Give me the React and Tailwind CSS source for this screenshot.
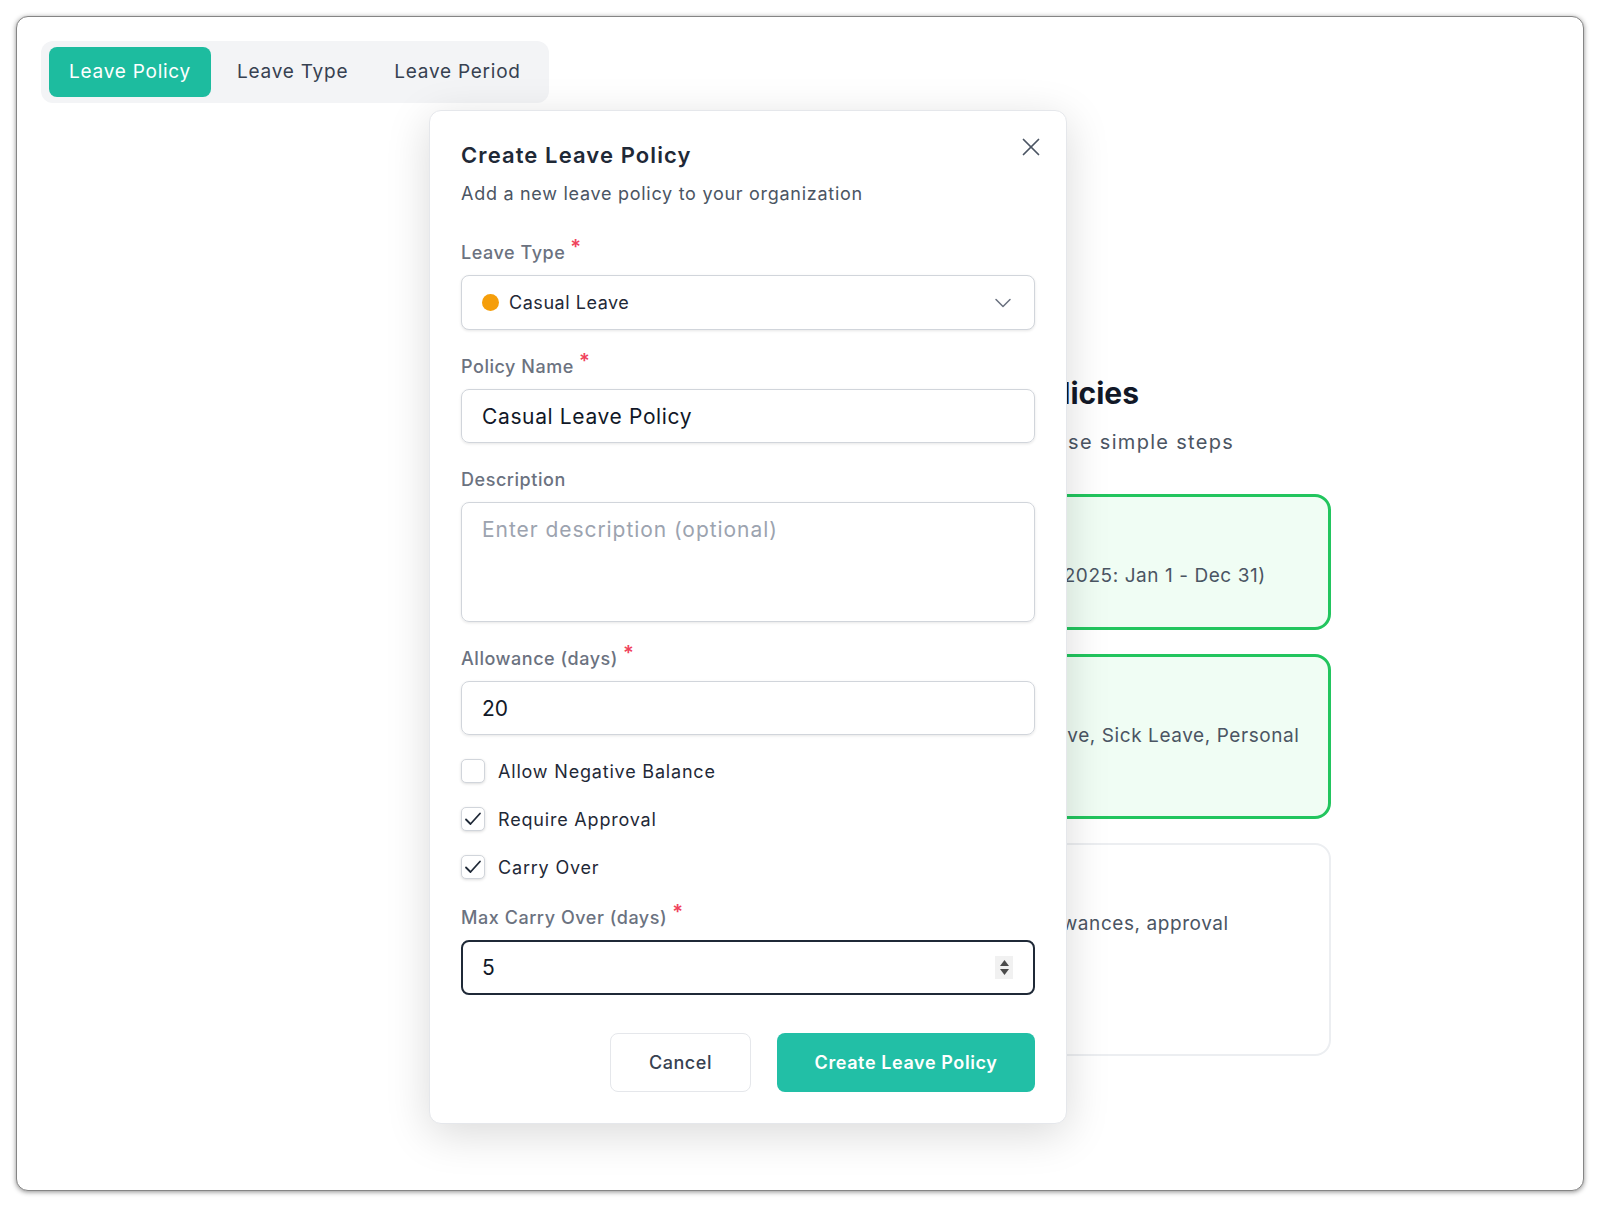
import { ChevronDown, X } from "lucide-react";

function Label({ children, required }) {
  return (
    <div className="mb-[11px] flex h-6 items-center text-[18px] font-medium tracking-[0.03em] text-[#6b7280]">
      {children}
      {required && (
        <span className="relative -top-[5px] ml-[5px] text-[20px] font-semibold text-[#f0435c]">*</span>
      )}
    </div>
  );
}

function CheckRow({ label, checked }) {
  return (
    <div className="flex h-6 items-center gap-[13px]">
      <div className="flex h-6 w-6 items-center justify-center rounded-[5px] border border-[#d1d5db] bg-white shadow-[0_1px_3px_rgba(0,0,0,0.14)]">
        {checked && (
          <svg width="20" height="20" viewBox="0 0 20 20" fill="none">
            <path d="M3 10.5l4.5 4.5L17 4.5" stroke="#1f2937" strokeWidth="1.8" strokeLinecap="round" strokeLinejoin="round" />
          </svg>
        )}
      </div>
      <span className="text-[18px] tracking-[0.045em] text-[#1f2937]">{label}</span>
    </div>
  );
}

function StepCard({ num, title, desc, active, height }) {
  return (
    <div
      className={`flex gap-4 rounded-2xl p-6 ${height} ${
        active ? "border-[3px] border-[#22c55e] bg-[#f0fdf4]" : "border-2 border-[#eceef1] bg-white"
      }`}
    >
      <div className="flex h-10 w-10 shrink-0 items-center justify-center rounded-full bg-[#22c55e] font-semibold text-white">
        {num}
      </div>
      <div>
        <div className="text-[20px] font-semibold text-[#111827]">{title}</div>
        <p className="mt-[11px] text-[19px] leading-7 tracking-[0.03em] text-[#4b5563]">{desc}</p>
      </div>
    </div>
  );
}

export default function App() {
  return (
    <div className="min-h-screen bg-white p-4 font-['Inter',sans-serif]">
      <div className="relative h-[1175px] overflow-hidden rounded-xl border border-[#858585] bg-white px-6 pt-6 shadow-[0_1px_5px_rgba(0,0,0,0.45)]">
        {/* tabs */}
        <div className="inline-flex gap-1.5 rounded-xl bg-[#f3f4f6] px-2 py-[6px]">
          <button className="h-[50px] rounded-lg bg-[#1dbc9f] px-5 text-[19px] tracking-[0.04em] text-white">Leave Policy</button>
          <button className="h-[50px] rounded-lg px-5 text-[19px] tracking-[0.04em] text-[#374151]">Leave Type</button>
          <button className="h-[50px] rounded-lg px-5 text-[19px] tracking-[0.04em] text-[#374151]">Leave Period</button>
        </div>

        {/* page content behind the dialog */}
        <div className="flex justify-end pr-[228px]">
          <div className="w-[560px] pt-[272px]">
            <h1 className="text-[30px] font-bold leading-9 text-[#111827]">Setting Up Leave Policies</h1>
            <p className="mt-[17px] text-[20px] leading-7 tracking-[0.065em] text-[#4b5563]">Get started by following these simple steps</p>
            <div className="mt-[38px] flex flex-col gap-6">
              <StepCard num="1" title="Leave Period" desc="Define leave periods (2025: Jan 1 - Dec 31)" active height="h-[136px]" />
              <StepCard num="2" title="Leave Types" desc="Add types: Casual Leave, Sick Leave, Personal Leave" active height="h-[165px]" />
              <StepCard num="3" title="Leave Policy" desc="Set up policy with allowances, approval workflows" height="h-[213px]" />
            </div>
          </div>
        </div>

        {/* dialog */}
        <div className="absolute left-[412px] top-[93px] w-[638px] rounded-xl border border-[#e5e7eb] bg-white px-[31px] pb-[31px] pt-[30px] shadow-[0_10px_44px_rgba(0,0,0,0.15)]">
          <button className="absolute right-[20px] top-[21px] text-[#4b5563]">
            <X size={30} strokeWidth={1.4} />
          </button>
          <h2 className="text-[22px] font-semibold leading-7 tracking-[0.05em] text-[#1f2937]">Create Leave Policy</h2>
          <p className="mt-[13px] text-[18px] leading-6 tracking-[0.04em] text-[#4b5563]">Add a new leave policy to your organization</p>

          <div className="mt-[34px] flex flex-col gap-6">
            <div>
              <Label required>Leave Type</Label>
              <div className="flex h-[55px] items-center rounded-lg border border-[#d1d5db] bg-white pl-5 pr-[17px] shadow-[0_1px_3px_rgba(0,0,0,0.1)]">
                <span className="h-[17px] w-[17px] rounded-full bg-[#f59e0b]" />
                <span className="ml-[10px] flex-1 text-[18px] tracking-[0.03em] text-[#1f2937]">Casual Leave</span>
                <ChevronDown size={28} strokeWidth={1.3} className="text-[#6b7280]" />
              </div>
            </div>

            <div>
              <Label required>Policy Name</Label>
              <input
                readOnly
                value="Casual Leave Policy"
                className="h-[54px] w-full rounded-lg border border-[#d1d5db] px-5 text-[21px] tracking-[0.03em] text-[#111827] shadow-[0_1px_3px_rgba(0,0,0,0.1)] outline-none"
              />
            </div>

            <div>
              <Label>Description</Label>
              <textarea
                readOnly
                placeholder="Enter description (optional)"
                className="block h-[120px] w-full resize-none rounded-lg border border-[#d1d5db] px-5 pt-[13px] text-[21px] leading-7 tracking-[0.045em] shadow-[0_1px_3px_rgba(0,0,0,0.1)] outline-none placeholder:text-[#9ca3af]"
              />
            </div>

            <div>
              <Label required>Allowance (days)</Label>
              <input
                readOnly
                value="20"
                className="h-[54px] w-full rounded-lg border border-[#d1d5db] px-5 text-[21px] text-[#111827] shadow-[0_1px_3px_rgba(0,0,0,0.1)] outline-none"
              />
            </div>

            <CheckRow label="Allow Negative Balance" />
            <CheckRow label="Require Approval" checked />
            <CheckRow label="Carry Over" checked />

            <div className="mt-[2px]">
              <Label required>Max Carry Over (days)</Label>
              <div className="flex h-[55px] items-center rounded-lg border-2 border-[#1f2937] bg-white pl-[19px] pr-[20px]">
                <span className="flex-1 text-[21px] text-[#111827]">5</span>
                <div className="flex h-[23px] w-[18px] flex-col items-center justify-center gap-[3px] bg-[#f1f1f1]">
                  <svg width="9" height="6" viewBox="0 0 9 6"><path d="M4.5 0L9 6H0z" fill="#4b4b4b" /></svg>
                  <svg width="9" height="6" viewBox="0 0 9 6"><path d="M0 0h9L4.5 6z" fill="#4b4b4b" /></svg>
                </div>
              </div>
            </div>
          </div>

          <div className="mt-[38px] flex justify-end gap-[26px]">
            <button className="h-[59px] w-[141px] rounded-lg border border-[#e5e7eb] bg-white text-[18px] font-medium tracking-[0.03em] text-[#374151]">
              Cancel
            </button>
            <button className="h-[59px] w-[258px] rounded-lg bg-[#22bfa6] text-[18px] font-semibold tracking-[0.033em] text-white">
              Create Leave Policy
            </button>
          </div>
        </div>
      </div>
    </div>
  );
}
